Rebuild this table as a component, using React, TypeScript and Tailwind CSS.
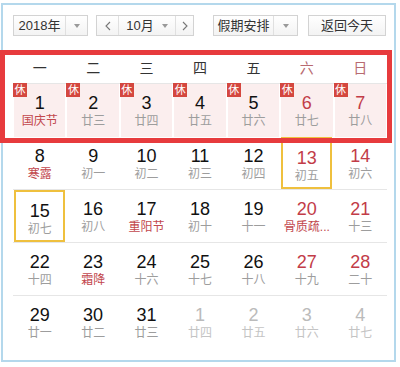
type Day = {
  n: number
  lunar: string
  red?: boolean
  redLunar?: boolean
  rest?: boolean
  other?: boolean
  pick?: boolean
}

const WEEK = ['一', '二', '三', '四', '五', '六', '日']

const ROWS: Day[][] = [
  [
    { n: 1, lunar: '国庆节', redLunar: true, rest: true },
    { n: 2, lunar: '廿三', rest: true },
    { n: 3, lunar: '廿四', rest: true },
    { n: 4, lunar: '廿五', rest: true },
    { n: 5, lunar: '廿六', rest: true },
    { n: 6, lunar: '廿七', red: true, rest: true },
    { n: 7, lunar: '廿八', red: true, rest: true },
  ],
  [
    { n: 8, lunar: '寒露', redLunar: true },
    { n: 9, lunar: '初一' },
    { n: 10, lunar: '初二' },
    { n: 11, lunar: '初三' },
    { n: 12, lunar: '初四' },
    { n: 13, lunar: '初五', red: true, pick: true },
    { n: 14, lunar: '初六', red: true },
  ],
  [
    { n: 15, lunar: '初七', pick: true },
    { n: 16, lunar: '初八' },
    { n: 17, lunar: '重阳节', redLunar: true },
    { n: 18, lunar: '初十' },
    { n: 19, lunar: '十一' },
    { n: 20, lunar: '骨质疏...', red: true, redLunar: true },
    { n: 21, lunar: '十三', red: true },
  ],
  [
    { n: 22, lunar: '十四' },
    { n: 23, lunar: '霜降', redLunar: true },
    { n: 24, lunar: '十六' },
    { n: 25, lunar: '十七' },
    { n: 26, lunar: '十八' },
    { n: 27, lunar: '十九', red: true },
    { n: 28, lunar: '二十', red: true },
  ],
  [
    { n: 29, lunar: '廿一' },
    { n: 30, lunar: '廿二' },
    { n: 31, lunar: '廿三' },
    { n: 1, lunar: '廿四', other: true },
    { n: 2, lunar: '廿五', other: true },
    { n: 3, lunar: '廿六', other: true },
    { n: 4, lunar: '廿七', other: true },
  ],
]

function Caret() {
  return <span className="inline-block h-0 w-0 border-x-[3px] border-t-[4px] border-x-transparent border-t-[#999]" />
}

function Chevron({ flip }: { flip?: boolean }) {
  return (
    <svg width="6" height="10" viewBox="0 0 6 10" className={flip ? 'rotate-180' : ''}>
      <path d="M5 1 1 5l4 4" fill="none" stroke="#777" strokeWidth="1.1" />
    </svg>
  )
}

function Cell({ d }: { d: Day }) {
  const num = d.other ? 'text-[#bbb]' : d.red ? 'text-[#c23c48]' : 'text-[#111]'
  const lun = d.other ? 'text-[#c4c4c4]' : d.redLunar ? 'text-[#c2474d]' : 'text-[#9d9d9d]'
  return (
    <div className={`relative h-full ${d.rest ? 'px-[1px]' : ''}`}>
      <div
        className={`flex h-full flex-col items-center pt-[9px] ${d.rest ? 'bg-[#fbeeee]' : ''} ${
          d.pick ? 'mx-auto h-[52px] w-[51px] border-2 border-[#efc03e] pt-[7px]' : ''
        }`}
      >
        <span className={`text-[18px] leading-[20px] ${num}`}>{d.n}</span>
        <span className={`mt-[1px] whitespace-nowrap text-[12px] leading-[14px] ${lun}`}>{d.lunar}</span>
      </div>
      {d.rest && (
        <span className="absolute left-0 top-[-1px] flex h-[14px] w-[14px] items-center justify-center bg-[#d4473f] text-[11px] leading-none text-white">
          休
        </span>
      )}
    </div>
  )
}

export default function App() {
  return (
    <div
      className="relative h-[367px] w-[400px] overflow-hidden bg-white pl-[1px] pt-[3px] text-[#333]"
      style={{ fontFamily: '"Liberation Sans", Arial, "Noto Sans CJK SC", sans-serif' }}
    >
      <div className="h-[359px] w-[395px] border-2 border-[#b4d8ec]">
        {/* toolbar */}
        <div className="ml-[10px] mt-[10px] flex h-[21px] items-center text-[13px] text-[#333]">
          <div className="flex h-full w-[75px] border border-[#d3d3d3] bg-gradient-to-b from-white to-[#f3f3f3]">
            <span className="flex flex-1 items-center justify-center">2018年</span>
            <span className="flex w-[22px] items-center justify-center border-l border-[#e0e0e0]">
              <Caret />
            </span>
          </div>
          <div className="ml-[8px] flex h-full w-[98px] border border-[#d3d3d3] bg-gradient-to-b from-white to-[#f3f3f3]">
            <span className="flex w-[22px] items-center justify-center border-r border-[#e0e0e0]">
              <Chevron />
            </span>
            <span className="flex flex-1 items-center justify-center gap-[8px]">
              10月 <Caret />
            </span>
            <span className="flex w-[18px] items-center justify-center border-l border-[#e0e0e0]">
              <Chevron flip />
            </span>
          </div>
          <div className="ml-[19px] flex h-full w-[85px] border border-[#d3d3d3] bg-gradient-to-b from-white to-[#f3f3f3]">
            <span className="flex flex-1 items-center justify-center">假期安排</span>
            <span className="flex w-[24px] items-center justify-center border-l border-[#e0e0e0]">
              <Caret />
            </span>
          </div>
          <div className="ml-[10px] flex h-full w-[78px] items-center justify-center border border-[#d3d3d3] bg-gradient-to-b from-white to-[#f3f3f3]">
            返回今天
          </div>
        </div>

        {/* calendar */}
        <div className="ml-[10px] mt-[18px] w-[374px]">
          <div className="grid h-[30px] grid-cols-7 border-b border-[#e6e6e6] text-[14px]">
            {WEEK.map((w, i) => (
              <div key={w} className={`flex items-center justify-center ${i > 4 ? 'text-[#b86a70]' : 'text-[#333]'}`}>
                {w}
              </div>
            ))}
          </div>
          {ROWS.map((row, r) => (
            <div
              key={r}
              className={`grid h-[53px] grid-cols-7 ${r > 0 && r < 4 ? 'border-b border-[#e6e6e6]' : ''}`}
            >
              {row.map((d, i) => (
                <Cell key={i} d={d} />
              ))}
            </div>
          ))}
        </div>
      </div>

      {/* red annotation frame */}
      <div className="pointer-events-none absolute left-0 top-[50px] h-[93px] w-[392px] border-[5px] border-[#e73b3d]" />
    </div>
  )
}
